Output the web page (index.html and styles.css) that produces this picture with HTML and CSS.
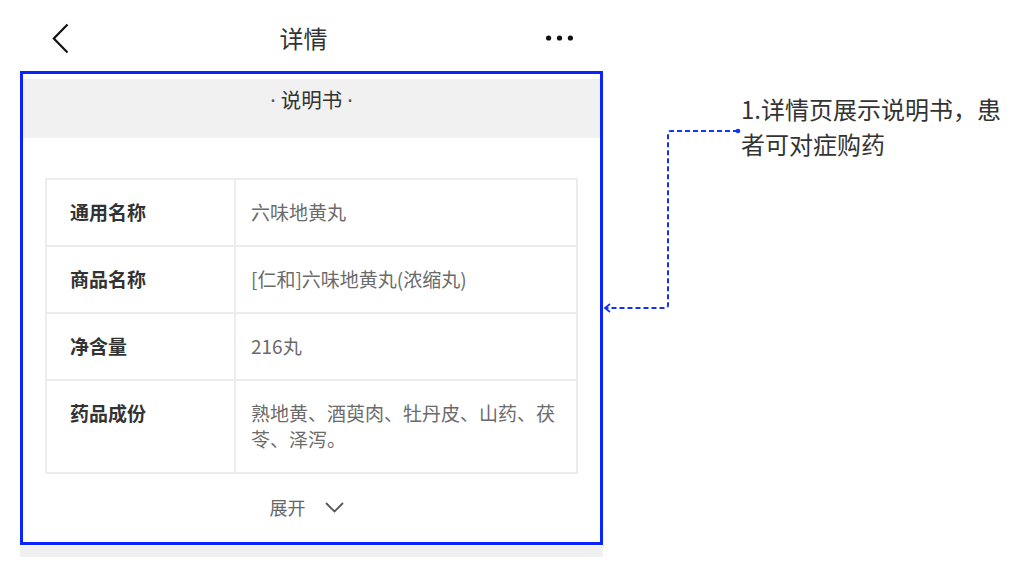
FILE: index.html
```html
<!DOCTYPE html>
<html lang="zh-CN">
<head>
    <meta charset="UTF-8">
    <meta name="viewport" content="width=device-width, initial-scale=1.0">
    <title>详情</title>
    <link rel="stylesheet" href="styles.css">
</head>
<body>
    <div class="page">
        <div class="phone">
            <div class="header">
                <span class="back">
                    <svg width="17" height="31" viewBox="0 0 17 31"><path d="M15.5 1.5 L1.8 15.5 L15.5 29.5" fill="none" stroke="#111" stroke-width="2.2"/></svg>
                </span>
                <h1 class="title">详情</h1>
                <span class="more">
                    <svg width="27" height="6" viewBox="0 0 27 6"><circle cx="2.6" cy="3" r="2.6" fill="#111"/><circle cx="13.5" cy="3" r="2.6" fill="#111"/><circle cx="24.4" cy="3" r="2.6" fill="#111"/></svg>
                </span>
            </div>

            <div class="highlight">
                <div class="band"><span class="dot">·</span>说明书<span class="dot">·</span></div>

                <div class="spec">
                    <div class="cell label">通用名称</div>
                    <div class="cell value">六味地黄丸</div>
                    <div class="cell label">商品名称</div>
                    <div class="cell value">[仁和]六味地黄丸(浓缩丸)</div>
                    <div class="cell label">净含量</div>
                    <div class="cell value">216丸</div>
                    <div class="cell label">药品成份</div>
                    <div class="cell value">熟地黄、酒萸肉、牡丹皮、山药、茯苓、泽泻。</div>
                </div>

                <div class="expand">
                    <span>展开</span>
                    <svg width="19" height="11" viewBox="0 0 19 11"><path d="M1 1 L9.5 9.5 L18 1" fill="none" stroke="#555" stroke-width="1.8"/></svg>
                </div>
            </div>
            <div class="gap"></div>
        </div>

        <div class="note">1.详情页展示说明书，患者可对症购药</div>

        <svg class="connector" width="145" height="190" viewBox="0 0 145 190">
            <circle cx="138" cy="6" r="2.3" fill="#1533f5"/>
            <path d="M138 6 H71 Q68 6 68 9 V180 Q68 183 65 183 H6" fill="none" stroke="#1533f5" stroke-width="2" stroke-dasharray="5 3"/>
            <path d="M10 179 L5 183 L10 187" fill="none" stroke="#1533f5" stroke-width="1.8"/>
        </svg>
    </div>
</body>
</html>
```

FILE: styles.css
```css
body {
    margin: 0;
    background-color: #fff;
    font-family: "Noto Sans CJK SC", "Noto Sans", sans-serif;
    color: #333;
}
.page {
    position: relative;
    display: flex;
    align-items: flex-start;
    padding-left: 20px;
}
.phone {
    width: 583px;
    flex-shrink: 0;
}
.header {
    height: 71px;
    display: flex;
    align-items: center;
    padding: 5px 30px 0 32px;
    box-sizing: border-box;
}
.back,
.more {
    display: flex;
}
.title {
    flex: 1;
    margin: 0;
    padding-right: 8px;
    text-align: center;
    font-size: 24px;
    font-weight: normal;
    line-height: 30px;
    color: #333;
}
.highlight {
    border: 3px solid #0a24ff;
    padding-top: 5px;
}
.band {
    height: 59px;
    line-height: 40px;
    background-color: #f1f1f1;
    text-align: center;
    font-size: 20.5px;
    color: #333;
}
.dot {
    font-family: "Noto Sans", sans-serif;
    color: #555;
    margin: 0 5px;
}
.spec {
    display: grid;
    grid-template-columns: 189px 1fr;
    margin: 40px 22px 0;
    border-top: 2px solid #ececec;
    border-left: 2px solid #ececec;
}
.cell {
    padding: 19px 14px 20px 15px;
    border-right: 2px solid #ececec;
    border-bottom: 2px solid #ececec;
    font-size: 19px;
    line-height: 26px;
}
.label {
    padding-left: 23px;
    font-weight: 600;
    color: #333;
}
.value {
    color: #6b6b6b;
}
.expand {
    display: flex;
    justify-content: center;
    align-items: center;
    gap: 19px;
    padding: 22px 10px 24px 0;
    font-size: 18px;
    line-height: 22px;
    color: #666;
}
.gap {
    height: 11px;
    margin-top: 1px;
    background-color: #f0f0f0;
}
.note {
    width: 268px;
    margin: 91px 0 0 138px;
    font-size: 24px;
    line-height: 35px;
    color: #333;
}
.connector {
    position: absolute;
    left: 600px;
    top: 125px;
}
```
